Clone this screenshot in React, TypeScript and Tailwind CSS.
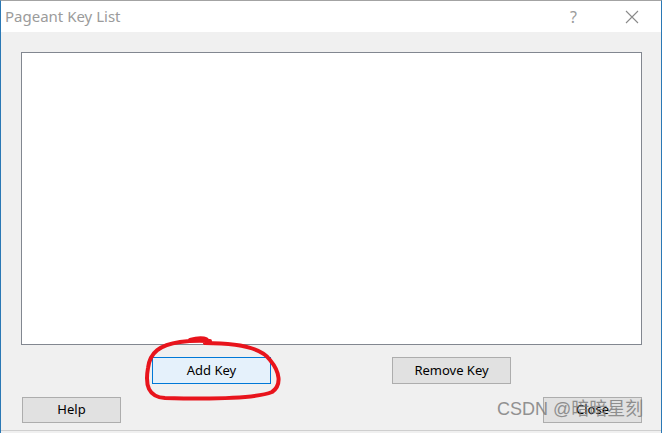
import React from "react";

export default function App() {
  const font = { fontFamily: '"Noto Sans", "Open Sans", "Noto Sans CJK SC", sans-serif' };
  return (
    <div className="w-[662px] h-[433px] bg-white relative overflow-hidden" style={font}>
      <div className="w-full h-full flex flex-col border-l border-r border-[#2a78b5] border-t border-t-[#a3a3a3]">
        {/* Title bar */}
        <div className="h-[31px] bg-white flex items-center shrink-0">
          <span className="pl-[4px] text-[15px] text-[#9b9b9b] leading-none">Pageant Key List</span>
          <div className="flex-1" />
          <span className="text-[16px] text-[#9b9b9b] leading-none mr-[48px]">?</span>
          <svg width="14" height="14" viewBox="0 0 14 14" className="mr-[22px]">
            <path d="M1 1 L13 13 M13 1 L1 13" stroke="#8a8a8a" strokeWidth="1.1" fill="none" />
          </svg>
        </div>
        {/* Body */}
        <div className="flex-1 bg-[#f0f0f0] flex flex-col pl-[20px] pr-[19px] pt-[20px]">
          <div className="h-[293px] bg-white border border-[#828790]" />
          <div className="flex mt-[12px] h-[27px]">
            <button className="ml-[131px] w-[119px] h-[27px] bg-[#e5f1fb] border border-[#0078d7] text-[13px] text-black flex items-center justify-center">
              Add Key
            </button>
            <button className="ml-[121px] w-[119px] h-[27px] bg-[#e1e1e1] border border-[#adadad] text-[13px] text-black flex items-center justify-center">
              Remove Key
            </button>
          </div>
          <div className="flex mt-[13px] h-[26px]">
            <button className="ml-[1px] w-[99px] h-[26px] bg-[#e1e1e1] border border-[#adadad] text-[13px] text-black flex items-center justify-center">
              Help
            </button>
            <div className="flex-1" />
            <button className="w-[99px] h-[26px] bg-[#e1e1e1] border border-[#adadad] text-[13px] text-black flex items-center justify-center">
              Close
            </button>
          </div>
        </div>
        <div className="h-[3px] shrink-0 bg-[#f0f0f0] border-t border-[#cfcfcf]" />
      </div>
      {/* Red annotation circle */}
      <svg className="absolute left-0 top-0 pointer-events-none" width="662" height="433" viewBox="0 0 662 433">
        <path
          d="M190 340 C200 337 212 338 205 343 C240 343 262 348 270 360 C280 372 282 385 272 392 C255 399 200 399 165 398 C148 397 145 385 148 368 C150 352 160 345 180 342 C195 340 205 341 210 341"
          stroke="#e8141c"
          strokeWidth="4"
          fill="none"
          strokeLinecap="round"
          strokeLinejoin="round"
        />
      </svg>
      {/* Watermark */}
      <div
        className="absolute left-[497px] top-[400px] text-[18px] text-[#7a7a7a] opacity-80 leading-none whitespace-nowrap pointer-events-none"
        style={{ fontFamily: '"Liberation Sans", "Noto Sans CJK SC", sans-serif' }}
      >
        CSDN @暗暗星刻
      </div>
    </div>
  );
}
